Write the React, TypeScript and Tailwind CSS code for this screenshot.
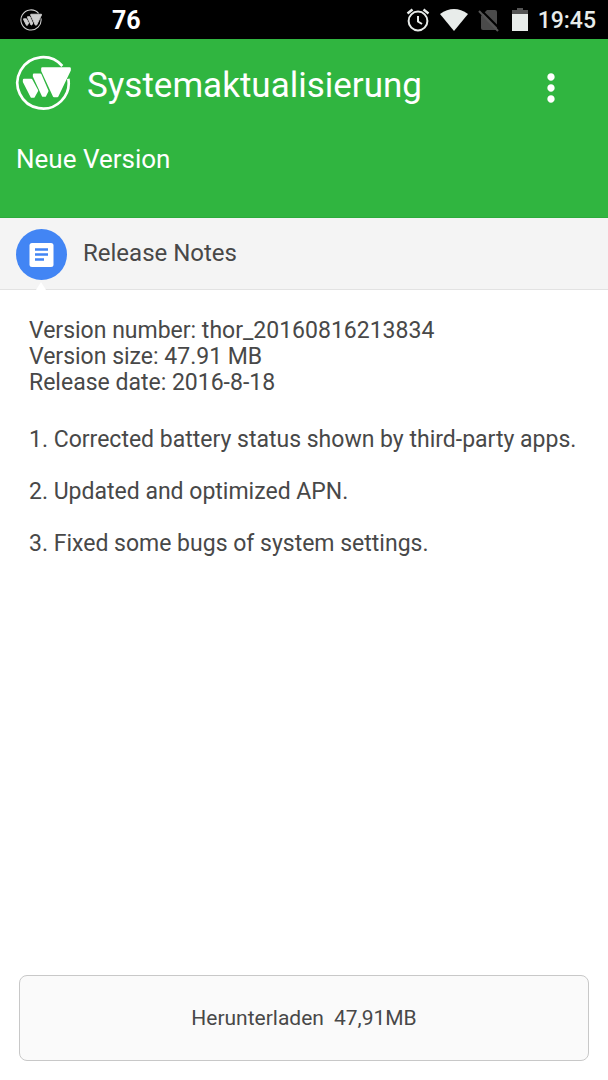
import { MdMoreVert } from 'react-icons/md'

interface UpdateInfo {
    version: string
    size: string
    date: string
    notes: string[]
}

const update: UpdateInfo = {
    version: 'thor_20160816213834',
    size: '47.91 MB',
    date: '2016-8-18',
    notes: [
        'Corrected battery status shown by third-party apps.',
        'Updated and optimized APN.',
        'Fixed some bugs of system settings.',
    ],
}

function Logo({ className }: { className: string }) {
    return (
        <svg viewBox="0 0 168 168" className={className} fill="currentColor" aria-hidden="true">
            <path d="M142 33A77 77 0 1 0 160 71" fill="none" stroke="currentColor" strokeWidth="8" />
            <g stroke="currentColor" strokeWidth="7" strokeLinejoin="round">
                <path d="M82 40H164V46L127 123H117L82 47Z" />
                <path d="M57 59H76L97 108L90 122H84L57 64Z" />
                <path d="M27 75H49L66 107L56 125H50L27 80Z" />
            </g>
        </svg>
    )
}

function StatusBar() {
    return (
        <div className="flex h-[39px] items-center bg-black pl-5 pr-3 text-[#e8ecea]">
            <Logo className="h-[22px] w-[22px] text-[#cfcfcf]" />
            <span className="ml-[70px] pt-0.5 text-[25px] font-bold text-white">76</span>
            <div className="ml-auto flex items-center">
                {/* Wecker */}
                <svg viewBox="0 0 24 24" className="h-6 w-6" fill="none" stroke="currentColor" strokeWidth="2" aria-hidden="true">
                    <circle cx="12" cy="13" r="9.4" />
                    <path d="M12 8V13.5L16 16" />
                    <path d="M1.5 5.5L6.5 1.5M22.5 5.5L17.5 1.5" strokeWidth="2.4" />
                </svg>
                {/* WLAN */}
                <svg viewBox="0 0 28 22" className="ml-2.5 h-[22px] w-7" fill="currentColor" aria-hidden="true">
                    <path d="M0 5Q14 -5 28 5L14 22Z" />
                </svg>
                {/* Keine SIM */}
                <svg viewBox="0 0 22 24" className="ml-2.5 h-6 w-[22px]" aria-hidden="true">
                    <path d="M9 2H17Q19 2 19 4V22H5Q3 22 3 20V8Z" fill="#4a4a4a" />
                    <path d="M2 1L22 21" stroke="#000" strokeWidth="2" />
                    <path d="M1 3L20 23" stroke="#555" strokeWidth="2" />
                </svg>
                {/* Akku */}
                <svg viewBox="0 0 16 24" className="ml-3 h-6 w-4" aria-hidden="true">
                    <path d="M5 0H11V2H16V7H0V2H5Z" fill="#555" />
                    <path d="M0 6H16V23H0Z" fill="currentColor" />
                </svg>
                <span className="ml-2.5 pt-1 text-[23px] font-medium">19:45</span>
            </div>
        </div>
    )
}

export default function App() {
    return (
        <div className="flex min-h-screen flex-col bg-white font-[Roboto,sans-serif] text-[#484848]">
            <StatusBar />

            <header className="border-b border-[#2cab3c] bg-[#30b540] px-[15px] pb-[42px] pt-[15px] text-white">
                <div className="flex items-center justify-between">
                    <div className="flex items-center gap-4">
                        <Logo className="h-14 w-14" />
                        <h1 className="pt-1.5 text-[35px]">Systemaktualisierung</h1>
                    </div>
                    <button type="button" aria-label="Mehr Optionen" className="mr-5 mt-2.5">
                        <MdMoreVert className="h-11 w-11" />
                    </button>
                </div>
                <p className="mt-[30px] pl-px text-[26px] leading-8">Neue Version</p>
            </header>

            <div className="relative flex h-[72px] items-center gap-4 border-b border-[#e2e2e2] bg-[#f4f4f4] px-4 pt-0.5">
                <svg viewBox="0 0 51 51" className="h-[51px] w-[51px]" aria-hidden="true">
                    <circle cx="25.5" cy="25.5" r="25.5" fill="#4285f4" />
                    <rect x="13.5" y="14" width="24" height="24" rx="2.5" fill="#fff" />
                    <path d="M19 20.5H32M19 25.5H32M19 30.5H28" stroke="#4285f4" strokeWidth="2.6" />
                </svg>
                <h2 className="pb-0.5 text-2xl">Release Notes</h2>
                <svg viewBox="0 0 10 8" className="absolute -bottom-px left-9 h-2 w-2.5" fill="#fff" aria-hidden="true">
                    <path d="M5 0L10 8H0Z" />
                </svg>
            </div>

            <main className="flex-1 px-[29px] pt-7 text-[23px] leading-[26px]">
                <p>{`Version number: ${update.version}`}</p>
                <p>{`Version size: ${update.size}`}</p>
                <p>{`Release date: ${update.date}`}</p>
                <ol className="mt-[31px] space-y-[26px]">
                    {update.notes.map((note, index) => (
                        <li key={note}>{`${index + 1}. ${note}`}</li>
                    ))}
                </ol>
            </main>

            <footer className="p-[19px]">
                <button
                    type="button"
                    className="flex h-[86px] w-full items-center justify-center gap-2.5 rounded-lg border border-[#c8c8c8] bg-[#fafafa] pt-0.5 text-[21px]"
                >
                    <span>Herunterladen</span>
                    <span>47,91MB</span>
                </button>
            </footer>
        </div>
    )
}
